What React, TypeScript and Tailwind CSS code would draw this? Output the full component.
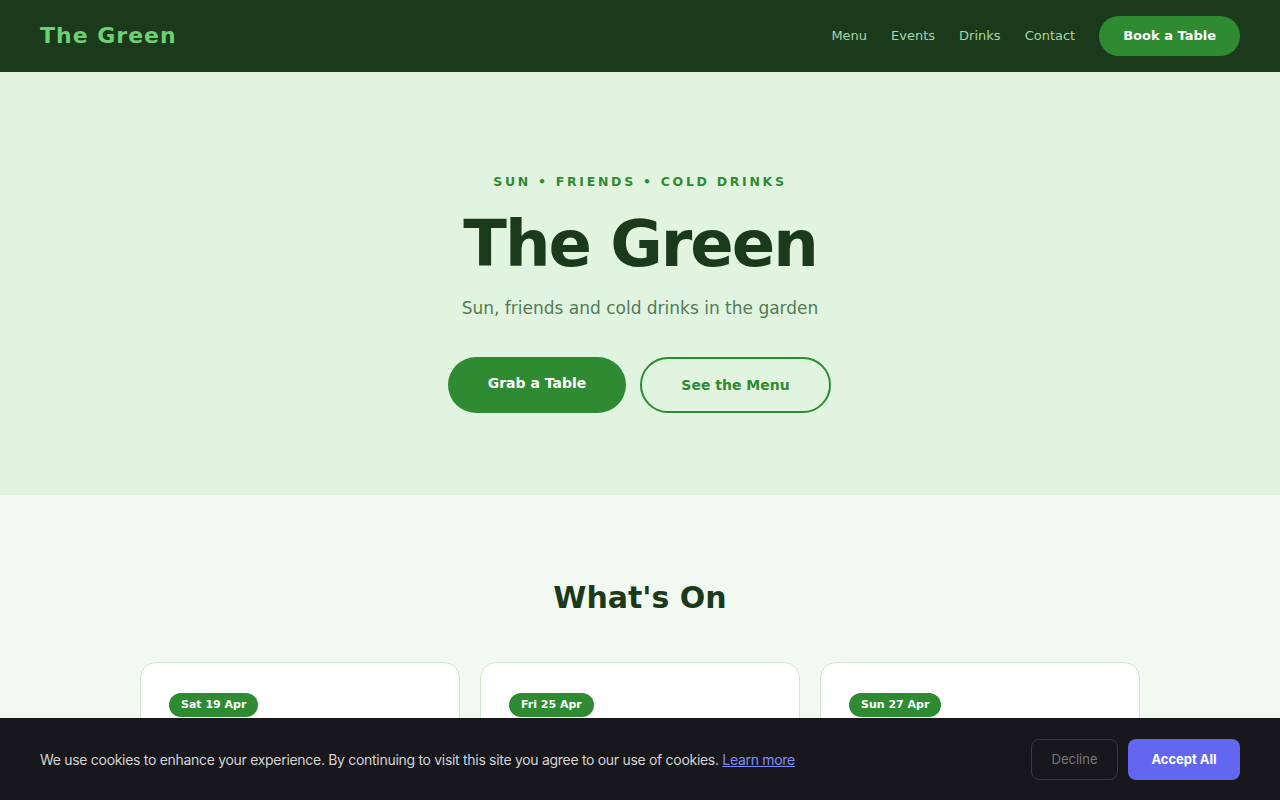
import React from "react";

const events = [
    { date: "Sat 19 Apr", title: "Garden Party", text: "Live acoustic sets from 3pm till late." },
    { date: "Fri 25 Apr", title: "Quiz Night", text: "Teams of up to six, prizes at the bar." },
    { date: "Sun 27 Apr", title: "Sunday Roast", text: "Slow-cooked roasts served all afternoon." },
];

function Nav() {
    return (
        <header className="h-[72px] bg-[#1b3a1b] flex items-center justify-between px-10">
            <a href="#" className="text-[22px] font-bold tracking-[1px] text-[#6fcf73] leading-7">
                The Green
            </a>
            <nav className="flex items-center">
                <a href="#" className="text-[13px] text-[#a5d6a7] mr-6">Menu</a>
                <a href="#" className="text-[13px] text-[#a5d6a7] mr-6">Events</a>
                <a href="#" className="text-[13px] text-[#a5d6a7] mr-6">Drinks</a>
                <a href="#" className="text-[13px] text-[#a5d6a7] mr-6">Contact</a>
                <a
                    href="#"
                    className="h-10 px-6 rounded-full bg-[#2e8b32] text-white text-[13px] font-bold flex items-center"
                >
                    Book a Table
                </a>
            </nav>
        </header>
    );
}

function Hero() {
    return (
        <section className="bg-[#e0f4e0] pt-[100px] pb-[82px] flex flex-col items-center text-center">
            <p className="text-[12.5px] font-bold tracking-[2.7px] text-[#2e8b32] leading-5">
                SUN • FRIENDS • COLD DRINKS
            </p>
            <h1 className="mt-[17px] text-[64px] font-bold tracking-[-2px] leading-[70px] text-[#1b3a1b]">The Green</h1>
            <p className="mt-[15px] text-[17px] leading-7 text-[#557a55]">
                Sun, friends and cold drinks in the garden
            </p>
            <div className="mt-[35px] flex gap-[14px]">
                <button className="h-14 w-[178px] rounded-full bg-[#2e8b32] text-white text-[14px] font-bold pb-1 -ml-px">
                    Grab a Table
                </button>
                <button className="h-14 w-[191px] rounded-full border-2 border-[#2e8b32] text-[#2e8b32] text-[14px] font-bold">
                    See the Menu
                </button>
            </div>
        </section>
    );
}

function WhatsOn() {
    return (
        <section className="bg-[#f1f9f1] pt-[83px] pb-24">
            <h2 className="text-center text-[30px] font-bold leading-10 text-[#1b3a1b]">What's On</h2>
            <div className="mt-[44px] mx-auto w-[1000px] grid grid-cols-3 gap-5">
                {events.map((e) => (
                    <div key={e.date} className="bg-white border border-[#d3e8d3] rounded-2xl px-7 pt-[30px] pb-7">
                        <div className="flex">
                            <span className="flex items-center h-6 px-3 rounded-full bg-[#2e8b32] text-white text-[11px] font-bold">
                                {e.date}
                            </span>
                        </div>
                        <h3 className="mt-4 text-[20px] font-bold text-[#1b3a1b]">{e.title}</h3>
                        <p className="mt-2 text-[15px] text-[#557a55]">{e.text}</p>
                    </div>
                ))}
            </div>
        </section>
    );
}

function CookieBanner() {
    return (
        <div className="fixed bottom-0 left-0 right-0 h-[82px] bg-[#17171c] flex items-center justify-between px-10 font-['Inter',sans-serif]">
            <p className="text-[14px] text-[#d4d4d8] tracking-[-0.3px] pt-px">
                We use cookies to enhance your experience. By continuing to visit this site you agree to our use of cookies.{" "}
                <a href="#" className="text-[#818cf8] underline">Learn more</a>
            </p>
            <div className="flex gap-[10px]">
                <button className="h-[41px] w-[87px] rounded-lg border border-[#3a3a40] text-[#77777f] text-[13px] pt-px">
                    Decline
                </button>
                <button className="h-[41px] w-[112px] rounded-lg bg-[#6366f1] text-white text-[13px] font-bold pt-px">
                    Accept All
                </button>
            </div>
        </div>
    );
}

export default function App() {
    return (
        <div className="min-h-screen font-['DejaVu_Sans',sans-serif]">
            <Nav />
            <Hero />
            <WhatsOn />
            <CookieBanner />
        </div>
    );
}
